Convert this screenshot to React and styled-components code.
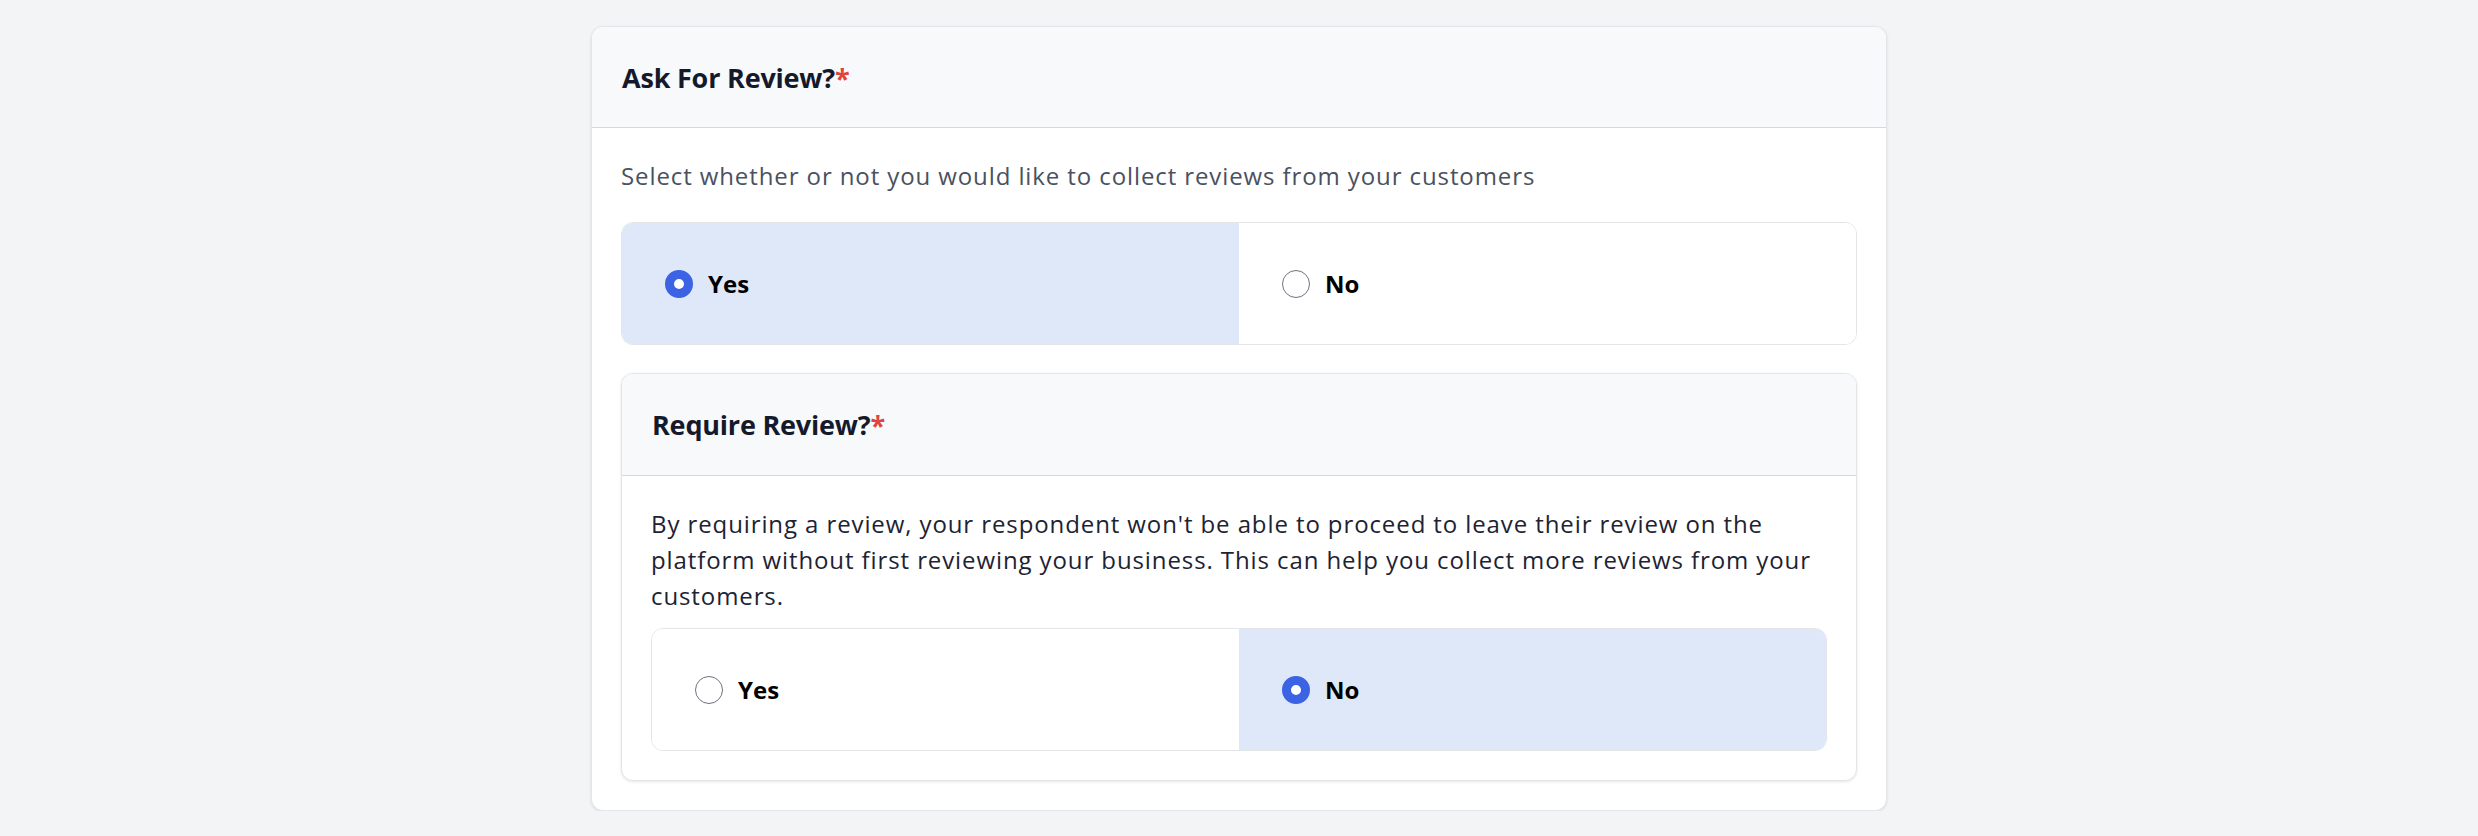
import React, { useState } from "react"
import styled, { createGlobalStyle } from "styled-components"

const GlobalStyle = createGlobalStyle`
  * {
    box-sizing: border-box;
  }
  body {
    margin: 0;
    background: #f3f4f6;
    font-family: "Open Sans", Lato, sans-serif;
  }
`

const Page = styled.div`
  display: flex;
  align-items: flex-start;
  justify-content: center;
  padding-top: 26px;
`

const Card = styled.section`
  width: ${(p) => (p.$nested ? "100%" : "1296px")};
  background: #fff;
  border: 1px solid #e3e5e9;
  border-radius: 12px;
  box-shadow: 0 1px 3px rgba(0, 0, 0, 0.1);
  overflow: hidden;
`

const Header = styled.div`
  display: flex;
  align-items: center;
  height: ${(p) => (p.$nested ? "102px" : "101px")};
  padding: 0 30px;
  background: #f8f9fb;
  border-bottom: 1px solid #d5d8de;
`

const Title = styled.h2`
  margin: 0;
  font-size: 27px;
  font-weight: 700;
  color: #141a2b;
  letter-spacing: -0.2px;
`

const Required = styled.span`
  color: #e0443e;
`

const Body = styled.div`
  display: flex;
  flex-direction: column;
  gap: ${(p) => p.$gap || "28px"};
  padding: 30px 29px 29px;
`

const Description = styled.p`
  margin: 0;
  font-size: 24px;
  line-height: 36px;
  letter-spacing: 0.9px;
  color: ${(p) => (p.$dark ? "#1d2333" : "#4a5160")};
`

const OptionGroup = styled.div`
  display: grid;
  grid-template-columns: 1fr 1fr;
  height: 123px;
  border: 1px solid #e3e5e9;
  border-radius: 12px;
  overflow: hidden;
`

const Option = styled.label`
  display: flex;
  align-items: center;
  gap: 15px;
  padding-left: 43px;
  background: ${(p) => (p.$selected ? "#dee8f9" : "#fff")};
  cursor: pointer;
  font-size: 24px;
  font-weight: 700;
  color: #000;
`

const Radio = styled.span`
  width: 28px;
  height: 28px;
  border-radius: 50%;
  flex-shrink: 0;
  background: #fff;
  border: ${(p) => (p.$checked ? "9px solid #3b63e3" : "1.5px solid #6f7380")};
`

function YesNo({ value, onChange }) {
  return (
    <OptionGroup>
      {["Yes", "No"].map((label) => (
        <Option key={label} $selected={value === label} onClick={() => onChange(label)}>
          <Radio $checked={value === label} />
          {label}
        </Option>
      ))}
    </OptionGroup>
  )
}

function App() {
  const [ask, setAsk] = useState("Yes")
  const [require, setRequire] = useState("No")

  return (
    <Page>
      <GlobalStyle />
      <Card>
        <Header>
          <Title>
            Ask For Review?<Required>*</Required>
          </Title>
        </Header>
        <Body>
          <Description>Select whether or not you would like to collect reviews from your customers</Description>
          <YesNo value={ask} onChange={setAsk} />
          {ask === "Yes" && (
            <Card $nested>
              <Header $nested>
                <Title>
                  Require Review?<Required>*</Required>
                </Title>
              </Header>
              <Body $gap="14px">
                <Description $dark>
                  By requiring a review, your respondent won't be able to proceed to leave their review on the platform without first reviewing your business. This can help you collect more reviews from your customers.
                </Description>
                <YesNo value={require} onChange={setRequire} />
              </Body>
            </Card>
          )}
        </Body>
      </Card>
    </Page>
  )
}

export default App
